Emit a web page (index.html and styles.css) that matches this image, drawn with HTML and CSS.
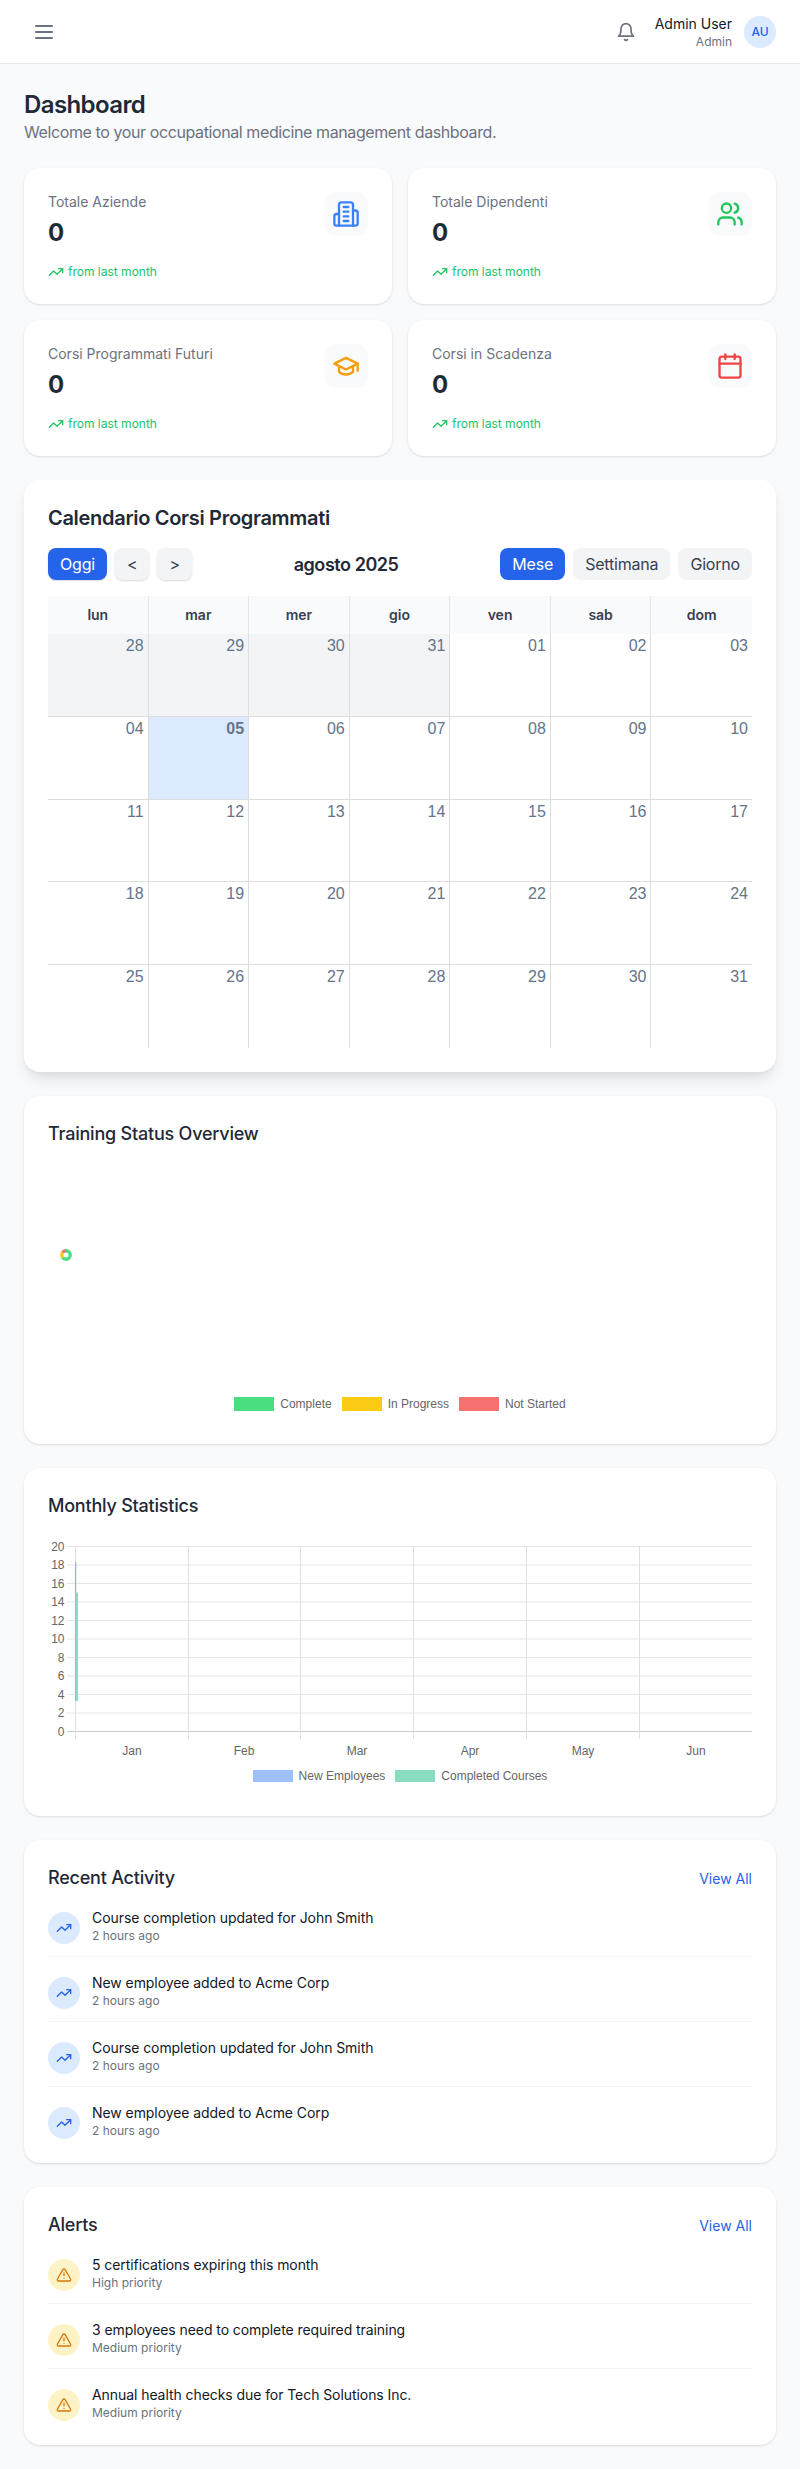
FILE: index.html
```html
<!DOCTYPE html>
<html lang="en">
<head>
  <meta charset="UTF-8">
  <title>Dashboard</title>
  <link rel="stylesheet" href="styles.css">
</head>
<body>
<header class="topbar">
  <button class="menu_btn" type="button" aria-label="Menu">
    <svg class="ico ico_24" viewBox="0 0 24 24"><path d="M4 6h16M4 12h16M4 18h16"/></svg>
  </button>
  <div class="topbar_right">
    <svg class="ico ico_20 bell" viewBox="0 0 24 24"><path d="M6 8a6 6 0 0 1 12 0c0 7 3 9 3 9H3s3-2 3-9"/><path d="M10.3 21a1.94 1.94 0 0 0 3.4 0"/></svg>
    <div class="user_info">
      <p class="user_name">Admin User</p>
      <p class="user_role">Admin</p>
    </div>
    <div class="avatar">AU</div>
  </div>
</header>

<main class="content">
  <h1 class="page_title">Dashboard</h1>
  <p class="page_sub">Welcome to your occupational medicine management dashboard.</p>

  <section class="stats">
    <div class="card stat">
      <div class="stat_top">
        <div>
          <p class="stat_label">Totale Aziende</p>
          <p class="stat_value">0</p>
        </div>
        <div class="stat_icon blue">
          <svg class="ico ico_28" viewBox="0 0 24 24"><path d="M6 22V4a2 2 0 0 1 2-2h8a2 2 0 0 1 2 2v18Z"/><path d="M6 12H4a2 2 0 0 0-2 2v6a2 2 0 0 0 2 2h2"/><path d="M18 9h2a2 2 0 0 1 2 2v9a2 2 0 0 1-2 2h-2"/><path d="M10 6h4M10 10h4M10 14h4M10 18h4"/></svg>
        </div>
      </div>
      <p class="trend"><svg class="ico ico_16" viewBox="0 0 24 24"><path d="M22 7l-8.500 8.500-5-5L2 17"/><path d="M16 7h6v6"/></svg>from last month</p>
    </div>
    <div class="card stat">
      <div class="stat_top">
        <div>
          <p class="stat_label">Totale Dipendenti</p>
          <p class="stat_value">0</p>
        </div>
        <div class="stat_icon green">
          <svg class="ico ico_28" viewBox="0 0 24 24"><path d="M16 21v-2a4 4 0 0 0-4-4H6a4 4 0 0 0-4 4v2"/><circle cx="9" cy="7" r="4"/><path d="M22 21v-2a4 4 0 0 0-3-3.870"/><path d="M16 3.130a4 4 0 0 1 0 7.750"/></svg>
        </div>
      </div>
      <p class="trend"><svg class="ico ico_16" viewBox="0 0 24 24"><path d="M22 7l-8.500 8.500-5-5L2 17"/><path d="M16 7h6v6"/></svg>from last month</p>
    </div>
    <div class="card stat">
      <div class="stat_top">
        <div>
          <p class="stat_label">Corsi Programmati Futuri</p>
          <p class="stat_value">0</p>
        </div>
        <div class="stat_icon orange">
          <svg class="ico ico_28" viewBox="0 0 24 24"><path d="M22 10v6"/><path d="M2 10l10-5 10 5-10 5z"/><path d="M6 12v5c3 3 9 3 12 0v-5"/></svg>
        </div>
      </div>
      <p class="trend"><svg class="ico ico_16" viewBox="0 0 24 24"><path d="M22 7l-8.500 8.500-5-5L2 17"/><path d="M16 7h6v6"/></svg>from last month</p>
    </div>
    <div class="card stat">
      <div class="stat_top">
        <div>
          <p class="stat_label">Corsi in Scadenza</p>
          <p class="stat_value">0</p>
        </div>
        <div class="stat_icon red">
          <svg class="ico ico_28" viewBox="0 0 24 24"><rect x="3" y="4" width="18" height="18" rx="2"/><path d="M16 2v4M8 2v4M3 10h18"/></svg>
        </div>
      </div>
      <p class="trend"><svg class="ico ico_16" viewBox="0 0 24 24"><path d="M22 7l-8.500 8.500-5-5L2 17"/><path d="M16 7h6v6"/></svg>from last month</p>
    </div>
  </section>

  <section class="card panel cal_panel">
    <h2 class="panel_title cal_title">Calendario Corsi Programmati</h2>
    <div class="cal_bar">
      <div class="btn_group">
        <button class="btn btn_on btn_raised" type="button">Oggi</button>
        <button class="btn btn_raised" type="button">&lt;</button>
        <button class="btn btn_raised" type="button">&gt;</button>
      </div>
      <div class="cal_month">agosto 2025</div>
      <div class="btn_group">
        <button class="btn btn_on" type="button">Mese</button>
        <button class="btn" type="button">Settimana</button>
        <button class="btn" type="button">Giorno</button>
      </div>
    </div>
    <div class="cal_head">
      <div>lun</div><div>mar</div><div>mer</div><div>gio</div><div>ven</div><div>sab</div><div>dom</div>
    </div>
    <div class="cal_grid">
      <div class="day other">28</div><div class="day other">29</div><div class="day other">30</div><div class="day other">31</div><div class="day">01</div><div class="day">02</div><div class="day">03</div>
      <div class="day">04</div><div class="day today">05</div><div class="day">06</div><div class="day">07</div><div class="day">08</div><div class="day">09</div><div class="day">10</div>
      <div class="day">11</div><div class="day">12</div><div class="day">13</div><div class="day">14</div><div class="day">15</div><div class="day">16</div><div class="day">17</div>
      <div class="day">18</div><div class="day">19</div><div class="day">20</div><div class="day">21</div><div class="day">22</div><div class="day">23</div><div class="day">24</div>
      <div class="day">25</div><div class="day">26</div><div class="day">27</div><div class="day">28</div><div class="day">29</div><div class="day">30</div><div class="day">31</div>
    </div>
  </section>

  <section class="card panel chart_panel">
    <h2 class="panel_title">Training Status Overview</h2>
    <div class="donut_area">
      <svg class="donut" viewBox="0 0 12 12" width="12" height="12">
        <circle class="donut_ring" cx="6" cy="6" r="4.200" pathLength="100" stroke="#4ade80" stroke-dasharray="65 35" stroke-dashoffset="25"/>
        <circle class="donut_ring" cx="6" cy="6" r="4.200" pathLength="100" stroke="#facc15" stroke-dasharray="20 80" stroke-dashoffset="-40"/>
        <circle class="donut_ring" cx="6" cy="6" r="4.200" pathLength="100" stroke="#f87171" stroke-dasharray="15 85" stroke-dashoffset="-60"/>
      </svg>
    </div>
    <div class="legend legend_tall">
      <span class="leg_item"><i class="swatch sw_green"></i>Complete</span>
      <span class="leg_item"><i class="swatch sw_yellow"></i>In Progress</span>
      <span class="leg_item"><i class="swatch sw_red"></i>Not Started</span>
    </div>
  </section>

  <section class="card panel chart_panel">
    <h2 class="panel_title">Monthly Statistics</h2>
    <svg class="bar_chart" viewBox="0 0 704 212" width="704" height="212">
      <path class="grid_h" d="M19 0.500H704M19 19H704M19 37.500H704M19 56H704M19 74.500H704M19 93H704M19 111.500H704M19 130H704M19 148.500H704M19 167H704"/>
      <path class="axis_line" d="M19 185.500H704"/>
      <path class="grid_v" d="M27.500 0V193M140.500 0V193M252.500 0V193M365.500 0V193M478.500 0V193M591.500 0V193"/>
      <rect x="27" y="16" width="1.200" height="139" fill="#93aee0"/>
      <rect x="27.500" y="46.500" width="2.500" height="108.500" fill="#88dcc0"/>
      <g class="tick_y">
        <text x="16.500" y="4.500">20</text><text x="16.500" y="23">18</text><text x="16.500" y="41.500">16</text><text x="16.500" y="60">14</text><text x="16.500" y="78.500">12</text><text x="16.500" y="97">10</text><text x="16.500" y="115.500">8</text><text x="16.500" y="134">6</text><text x="16.500" y="152.500">4</text><text x="16.500" y="171">2</text><text x="16.500" y="189.500">0</text>
      </g>
      <g class="tick_x">
        <text x="84" y="208.500">Jan</text><text x="196" y="208.500">Feb</text><text x="309" y="208.500">Mar</text><text x="422" y="208.500">Apr</text><text x="535" y="208.500">May</text><text x="648" y="208.500">Jun</text>
      </g>
    </svg>
    <div class="legend legend_bars">
      <span class="leg_item"><i class="swatch sw_blue"></i>New Employees</span>
      <span class="leg_item"><i class="swatch sw_teal"></i>Completed Courses</span>
    </div>
  </section>

  <section class="card panel list_panel">
    <div class="panel_head">
      <h2 class="panel_title">Recent Activity</h2>
      <a class="view_all" href="#">View All</a>
    </div>
    <div class="row">
      <div class="row_icon ri_blue"><svg class="ico ico_16" viewBox="0 0 24 24"><path d="M22 7l-8.500 8.500-5-5L2 17"/><path d="M16 7h6v6"/></svg></div>
      <div><p class="row_text">Course completion updated for John Smith</p><p class="row_sub">2 hours ago</p></div>
    </div>
    <div class="row">
      <div class="row_icon ri_blue"><svg class="ico ico_16" viewBox="0 0 24 24"><path d="M22 7l-8.500 8.500-5-5L2 17"/><path d="M16 7h6v6"/></svg></div>
      <div><p class="row_text">New employee added to Acme Corp</p><p class="row_sub">2 hours ago</p></div>
    </div>
    <div class="row">
      <div class="row_icon ri_blue"><svg class="ico ico_16" viewBox="0 0 24 24"><path d="M22 7l-8.500 8.500-5-5L2 17"/><path d="M16 7h6v6"/></svg></div>
      <div><p class="row_text">Course completion updated for John Smith</p><p class="row_sub">2 hours ago</p></div>
    </div>
    <div class="row">
      <div class="row_icon ri_blue"><svg class="ico ico_16" viewBox="0 0 24 24"><path d="M22 7l-8.500 8.500-5-5L2 17"/><path d="M16 7h6v6"/></svg></div>
      <div><p class="row_text">New employee added to Acme Corp</p><p class="row_sub">2 hours ago</p></div>
    </div>
  </section>

  <section class="card panel list_panel">
    <div class="panel_head">
      <h2 class="panel_title">Alerts</h2>
      <a class="view_all" href="#">View All</a>
    </div>
    <div class="row">
      <div class="row_icon ri_amber"><svg class="ico ico_16" viewBox="0 0 24 24"><path d="M21.730 18l-8-14a2 2 0 0 0-3.480 0l-8 14A2 2 0 0 0 4 21h16a2 2 0 0 0 1.730-3Z"/><path d="M12 9v4M12 17h.01"/></svg></div>
      <div><p class="row_text">5 certifications expiring this month</p><p class="row_sub">High priority</p></div>
    </div>
    <div class="row">
      <div class="row_icon ri_amber"><svg class="ico ico_16" viewBox="0 0 24 24"><path d="M21.730 18l-8-14a2 2 0 0 0-3.480 0l-8 14A2 2 0 0 0 4 21h16a2 2 0 0 0 1.730-3Z"/><path d="M12 9v4M12 17h.01"/></svg></div>
      <div><p class="row_text">3 employees need to complete required training</p><p class="row_sub">Medium priority</p></div>
    </div>
    <div class="row">
      <div class="row_icon ri_amber"><svg class="ico ico_16" viewBox="0 0 24 24"><path d="M21.730 18l-8-14a2 2 0 0 0-3.480 0l-8 14A2 2 0 0 0 4 21h16a2 2 0 0 0 1.730-3Z"/><path d="M12 9v4M12 17h.01"/></svg></div>
      <div><p class="row_text">Annual health checks due for Tech Solutions Inc.</p><p class="row_sub">Medium priority</p></div>
    </div>
  </section>
</main>
</body>
</html>
```

FILE: styles.css
```css
*{
  margin: 0;
  padding: 0;
  box-sizing: border-box;
}
body{
  background: #f9fafb;
  font-family: Inter, "Noto Sans", sans-serif;
  color: #1f2937;
}
.ico{
  display: block;
  flex: none;
  fill: none;
  stroke: currentColor;
  stroke-width: 2;
  stroke-linecap: round;
  stroke-linejoin: round;
}
.ico_16{ width: 16px; height: 16px; }
.ico_20{ width: 20px; height: 20px; }
.ico_24{ width: 24px; height: 24px; }
.ico_28{ width: 28px; height: 28px; }

/* top bar */
.topbar{
  height: 64px;
  background: #fff;
  border-bottom: 1px solid #e5e7eb;
  display: flex;
  align-items: center;
  justify-content: space-between;
  padding: 0 24px;
}
.menu_btn{
  border: 0;
  background: none;
  padding: 8px;
  color: #6b7280;
}
.topbar_right{
  display: flex;
  align-items: center;
}
.bell{
  color: #6b7280;
  margin-right: 19px;
}
.user_info{
  text-align: right;
  margin-right: 12px;
}
.user_name{
  font-size: 14px;
  line-height: 20px;
  color: #111827;
}
.user_role{
  font-size: 12px;
  line-height: 16px;
  color: #6b7280;
}
.avatar{
  width: 32px;
  height: 32px;
  border-radius: 50%;
  background: #dbeafe;
  color: #2563eb;
  font-size: 12px;
  font-weight: 500;
  display: flex;
  align-items: center;
  justify-content: center;
}

/* page */
.content{
  padding: 24px;
}
.page_title{
  font-size: 24px;
  line-height: 34px;
  margin-bottom: -2px;
  font-weight: 600;
  letter-spacing: -.025em;
  color: #1f2937;
}
.page_sub{
  font-size: 16px;
  line-height: 24px;
  letter-spacing: -.025em;
  color: #6b7280;
}
.card{
  background: #fff;
  border-radius: 16px;
  box-shadow: 0 1px 3px rgba(0,0,0,.1), 0 1px 2px -1px rgba(0,0,0,.1);
  padding: 24px;
}

/* stat cards */
.stats{
  display: grid;
  grid-template-columns: 1fr 1fr;
  gap: 16px;
  margin-top: 24px;
}
.stat_top{
  display: flex;
  justify-content: space-between;
  align-items: flex-start;
}
.stat_label{
  font-size: 14px;
  line-height: 20px;
  color: #6b7280;
}
.stat_value{
  font-size: 24px;
  line-height: 32px;
  font-weight: 700;
  color: #1f2937;
  margin-top: 5px;
}
.stat_icon{
  padding: 8px;
  border-radius: 12px;
  background: #f9fafb;
}
.blue{ color: #3b82f6; }
.green{ color: #22c55e; }
.orange{ color: #f59e0b; }
.red{ color: #ef4444; }
.trend{
  display: flex;
  align-items: center;
  gap: 4px;
  margin-top: 15px;
  font-size: 12px;
  line-height: 16px;
  color: #22c55e;
}

/* panels */
.panel{
  margin-top: 24px;
}
.panel_title{
  font-size: 18px;
  line-height: 28px;
  font-weight: 500;
  letter-spacing: -.012em;
  color: #1f2937;
}
.chart_panel{
  height: 348px;
}

/* calendar */
.cal_panel{
  height: 592px;
  box-shadow: 0 10px 15px -3px rgba(0,0,0,.1), 0 4px 6px -2px rgba(0,0,0,.05);
}
.cal_title{
  font-size: 20px;
  font-weight: 600;
  letter-spacing: -.015em;
}
.cal_bar{
  display: flex;
  align-items: center;
  justify-content: space-between;
  margin: 16px 0;
}
.btn_group{
  display: flex;
  gap: 8px;
}
.btn{
  height: 32px;
  padding: 0 12px;
  border: 0;
  border-radius: 8px;
  background: #f3f4f6;
  color: #374151;
  font-family: inherit;
  font-size: 16px;
  letter-spacing: -.012em;
}
.btn_on{
  background: #2563eb;
  color: #fff;
}
.btn_raised{
  box-shadow: 0 1px 2px rgba(0,0,0,.15);
}
.cal_month{
  font-size: 18px;
  font-weight: 600;
  letter-spacing: -.025em;
  color: #1f2937;
}
.cal_head{
  display: grid;
  grid-template-columns: repeat(7, 1fr);
  background: #f9fafb;
  font-size: 14px;
  font-weight: 600;
  color: #374151;
}
.cal_head div{
  height: 38px;
  line-height: 38px;
  text-align: center;
  border-right: 1px solid #e5e7eb;
}
.cal_head div:last-child{
  border-right: 0;
}
.cal_grid{
  display: grid;
  grid-template-columns: repeat(7, 1fr);
  grid-auto-rows: 82.8px;
}
.day{
  text-align: right;
  padding-right: 4px;
  font-family: "Liberation Sans", Arial, sans-serif;
  font-size: 16px;
  line-height: 24px;
  color: #64748b;
  border-right: 1px solid #ddd;
  border-bottom: 1px solid #ddd;
}
.day:nth-child(7n){
  border-right: 0;
}
.day:nth-last-child(-n+7){
  border-bottom: 0;
}
.other{
  background: #f3f4f6;
}
.today{
  background: #dbeafe;
  font-weight: 700;
}

/* charts */
.donut_area{
  height: 249px;
  padding: 101px 12px 0;
}
.donut{
  display: block;
}
.donut_ring{
  fill: none;
  stroke-width: 3.4;
}
.legend{
  display: flex;
  justify-content: center;
  gap: 10px;
  font-family: "Liberation Sans", Arial, sans-serif;
  font-size: 12px;
  color: #666;
}
.legend_tall .swatch{ height: 14px; }
.legend_bars .swatch{ height: 12px; }
.legend_bars{ margin-top: 11px; }
.leg_item{
  display: flex;
  align-items: center;
  gap: 6px;
  line-height: 14px;
}
.swatch{
  display: block;
  width: 40px;
}
.sw_green{ background: #4ade80; }
.sw_yellow{ background: #facc15; }
.sw_red{ background: #f87171; }
.sw_blue{ background: #9dbffa; }
.sw_teal{ background: #88dcc0; }
.bar_chart{
  display: block;
  margin-top: 26px;
  overflow: visible;
}
.grid_h{
  stroke: #e5e5e5;
  fill: none;
}
.axis_line{
  stroke: #ccc;
  fill: none;
}
.grid_v{
  stroke: #e0e0e0;
  fill: none;
}
.tick_y text,
.tick_x text{
  font-family: "Liberation Sans", Arial, sans-serif;
  font-size: 12px;
  fill: #666;
}
.tick_y text{ text-anchor: end; }
.tick_x text{ text-anchor: middle; }

/* lists */
.panel_head{
  display: flex;
  align-items: center;
  justify-content: space-between;
  margin-bottom: 16px;
}
.view_all{
  font-size: 14px;
  color: #2563eb;
  text-decoration: none;
}
.row{
  display: flex;
  align-items: flex-start;
  gap: 12px;
  padding-bottom: 12px;
  margin-bottom: 16px;
  border-bottom: 1px solid #f3f4f6;
}
.row:last-child{
  padding-bottom: 0;
  margin-bottom: 0;
  border-bottom: 0;
}
.row_icon{
  width: 32px;
  height: 32px;
  margin-top: 4px;
  border-radius: 50%;
  display: flex;
  align-items: center;
  justify-content: center;
  flex: none;
}
.ri_blue{
  background: #dbeafe;
  color: #2563eb;
}
.ri_amber{
  background: #fef3c7;
  color: #d97706;
}
.row_text{
  font-size: 14px;
  line-height: 20px;
  letter-spacing: -.005em;
  color: #111827;
}
.row_sub{
  font-size: 12px;
  line-height: 16px;
  color: #6b7280;
}
```
